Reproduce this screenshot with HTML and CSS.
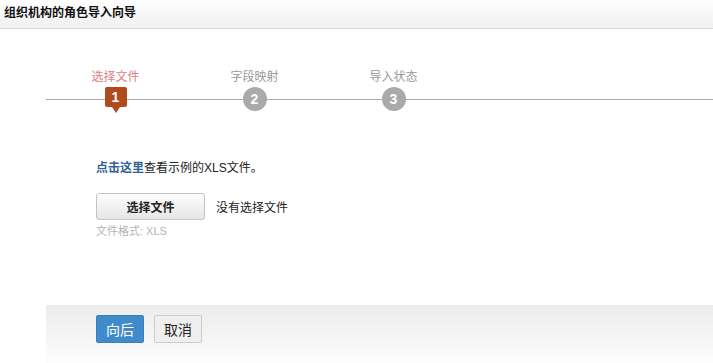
FILE: index.html
```html
<!DOCTYPE html>
<html lang="zh-CN">
<head>
  <meta charset="UTF-8" />
  <title>组织机构的角色导入向导</title>
  <link rel="stylesheet" href="styles.css">
</head>
<body>
  <div class="header">组织机构的角色导入向导</div>

  <div class="wizard">
    <div class="steps">
      <div class="step active">
        <div class="step-label">选择文件</div>
        <div class="step-mark">1</div>
      </div>
      <div class="step">
        <div class="step-label">字段映射</div>
        <div class="step-mark">2</div>
      </div>
      <div class="step">
        <div class="step-label">导入状态</div>
        <div class="step-mark">3</div>
      </div>
    </div>

    <div class="content">
      <p class="hint"><a href="#" class="sample-link">点击这里</a>查看示例的XLS文件。</p>
      <div class="file-row">
        <button type="button" class="file-btn">选择文件</button>
        <span class="file-name">没有选择文件</span>
      </div>
      <div class="file-format">文件格式: XLS</div>
    </div>

    <div class="footer">
      <button type="button" class="btn btn-primary">向后</button>
      <button type="button" class="btn btn-default">取消</button>
    </div>
  </div>
</body>
</html>
```

FILE: styles.css
```css
* {
  box-sizing: border-box;
}

body {
  margin: 0;
  padding: 0;
  font-family: "Liberation Sans", "Noto Sans CJK SC", sans-serif;
  font-size: 12px;
  color: #222;
  background: #fff;
}

.header {
  height: 29px;
  line-height: 27px;
  padding-left: 4px;
  font-weight: bold;
  font-size: 12px;
  color: #111;
  background: linear-gradient(#ffffff, #f0f0f0);
  border-bottom: 1px solid #dcdcdc;
}

.wizard {
  margin-left: 46px;
}

/* steps bar */
.steps {
  display: flex;
  margin-top: 40px;
  background: linear-gradient(#aaa, #aaa) no-repeat 0 30px / 100% 1px;
}

.step {
  width: 139px;
  display: flex;
  flex-direction: column;
  align-items: center;
}

.step-label {
  height: 16px;
  line-height: 16px;
  color: #999;
}

.step-mark {
  margin-top: 2px;
  width: 24px;
  height: 24px;
  line-height: 24px;
  border-radius: 50%;
  background: #aaa;
  color: #fff;
  font-size: 14px;
  font-weight: bold;
  text-align: center;
}

.step.active .step-label {
  color: #dc7f7f;
}

.step.active .step-mark {
  position: relative;
  width: 22px;
  height: 20px;
  line-height: 20px;
  border-radius: 2px;
  background: #b04a1f;
}

.step.active .step-mark::after {
  content: "";
  position: absolute;
  left: 7px;
  top: 20px;
  border-left: 4px solid transparent;
  border-right: 4px solid transparent;
  border-top: 6px solid #b04a1f;
}

/* file chooser */
.content {
  padding-left: 50px;
  height: 194px;
}

.hint {
  margin: 0;
  padding-top: 49px;
  line-height: 16px;
}

.sample-link {
  color: #2f6296;
  font-weight: bold;
  text-decoration: none;
}

.file-row {
  display: flex;
  align-items: center;
  margin-top: 17px;
}

.file-btn {
  width: 109px;
  height: 27px;
  padding: 0;
  font-family: inherit;
  font-size: 12px;
  font-weight: bold;
  color: #222;
  background: linear-gradient(#fdfdfd, #e6e6e6);
  border: 1px solid #c4c4c4;
  border-radius: 3px;
}

.file-name {
  margin-left: 11px;
}

.file-format {
  margin-top: 4px;
  line-height: 14px;
  font-size: 11px;
  color: #b4b4b4;
}

/* footer */
.footer {
  display: flex;
  gap: 10px;
  height: 58px;
  padding: 10px 0 0 50px;
  background: linear-gradient(#edecec, #fdfdfd);
}

.btn {
  width: 48px;
  height: 28px;
  padding: 0;
  font-family: inherit;
  font-size: 14px;
  border-radius: 2px;
}

.btn-primary {
  color: #fff;
  background: #428bca;
  border: 1px solid #3a7fc0;
}

.btn-default {
  color: #222;
  background: #efefef;
  border: 1px solid #ccc;
}
```
